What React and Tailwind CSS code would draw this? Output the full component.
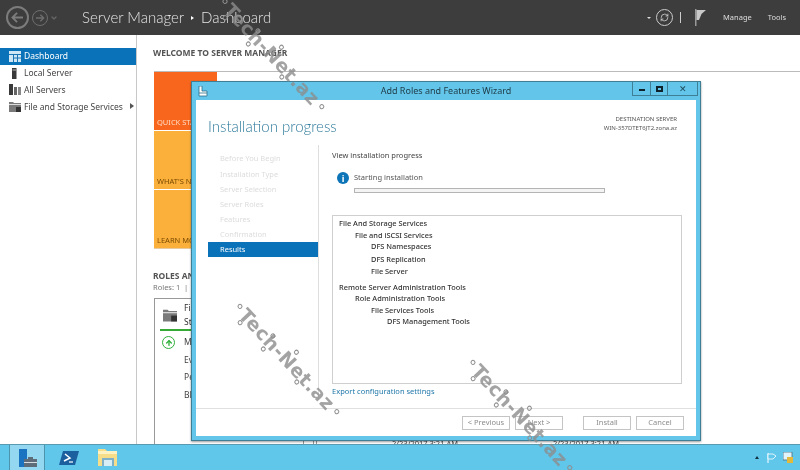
import React from 'react';
import { RefreshCw, ChevronDown, ArrowUp } from 'lucide-react';

const FONT = 'font-["Noto_Sans","Open_Sans",sans-serif]';
const LIGHT = 'font-["Lato","Noto_Sans",sans-serif] font-light';

const GridIcon = () => (
  <svg width="12" height="11" viewBox="0 0 12 11">
    <rect width="12" height="11" fill="#cfe6f5" />
    <path d="M0 3.500h12M4.500 3.500V11M8.500 3.500V11M4.500 7h7.500" stroke="#1b74b4" strokeWidth="1" />
  </svg>
);

const LocalServerIcon = () => (
  <svg width="12" height="11" viewBox="0 0 12 11">
    <rect x="3" y="0" width="4.500" height="11" fill="#3a3a3a" />
    <rect x="3.500" y="1.500" width="3.500" height="1" fill="#bbb" />
  </svg>
);

const AllServersIcon = () => (
  <svg width="12" height="11" viewBox="0 0 12 11">
    <rect x="0" y="0" width="4" height="11" fill="#3a3a3a" />
    <rect x="5" y="3" width="3" height="8" fill="#666" />
    <rect x="9" y="3" width="3" height="8" fill="#888" />
  </svg>
);

const FolderIcon = ({ w = 12, h = 11 }) => (
  <svg width={w} height={h} viewBox="0 0 12 11">
    <path d="M0 1h4l1 1h7v9H0z" fill="#7a7a7a" />
    <rect x="0" y="3" width="12" height="1" fill="#ddd" />
    <rect x="7" y="6" width="5" height="5" fill="#333" />
  </svg>
);

const Node = ({ className }) => (
  <span className={`absolute w-[5px] h-[5px] rounded-full border border-[#8f8f8f] ${className}`} />
);

// rotated logo text, the little rings are the circuit ends of the letters
const Watermark = ({ className }) => (
  <div className={`absolute w-[150px] h-[24px] rotate-[47deg] flex items-center justify-center pointer-events-none ${className}`}>
    <span className='text-[19px] leading-none font-bold font-["DejaVu_Sans",sans-serif] tracking-[0.5px] text-[#8c8c8c]/80 whitespace-nowrap'>Tech-Net.az</span>
    <Node className="left-[2px] top-[8px]" />
    <Node className="left-[14px] top-[19px]" />
    <Node className="left-[46px] top-[4px]" />
    <Node className="left-[49px] top-[20px]" />
    <Node className="left-[74px] top-[-2px]" />
    <Node className="left-[96px] top-[18px]" />
    <Node className="left-[145px] top-[9px]" />
  </div>
);

const navItems = [
  { label: 'Dashboard', icon: GridIcon, active: true },
  { label: 'Local Server', icon: LocalServerIcon },
  { label: 'All Servers', icon: AllServersIcon },
  { label: 'File and Storage Services', icon: FolderIcon, arrow: true },
];

const Sidebar = () => (
  <aside className="w-[137px] shrink-0 border-r border-[#c8c8c8] pt-[13px]">
    {navItems.map((item) => (
      <div
        key={item.label}
        className={`h-[16.700px] flex items-center pl-[9px] gap-[3px] text-[8.500px] whitespace-nowrap ${item.active ? 'bg-[#0a72b8] text-white' : 'text-[#444]'}`}
      >
        <item.icon />
        <span className="pt-px">{item.label}</span>
        {item.arrow && <span className="ml-[4px] w-0 h-0 border-y-[3px] border-y-transparent border-l-[4px] border-l-[#555]" />}
      </div>
    ))}
  </aside>
);

const tiles = [
  { label: 'QUICK START', bg: 'bg-[#f8661e]', text: 'text-[#ffd9c0]' },
  { label: "WHAT'S NEW", bg: 'bg-[#fbb03b]', text: 'text-[#7a4a00]' },
  { label: 'LEARN MORE', bg: 'bg-[#fbb03b]', text: 'text-[#7a4a00]' },
];

const MainPanel = () => (
  <main className="flex-1 pl-[16px] pt-[12px] text-[#444] relative">
    <h2 className="text-[8.500px] font-bold leading-[12px] text-[#555]">WELCOME TO SERVER MANAGER</h2>
    <div className="mt-[12px] h-[178px] border-t border-[#bbb] flex ml-px">
      <div className="w-[63px] flex flex-col gap-px border-b border-[#e8c9a0]">
        {tiles.map((t) => (
          <div key={t.label} className={`flex-1 ${t.bg} ${t.text} flex items-end pl-[3px] pb-[2px] text-[7.500px] whitespace-nowrap overflow-hidden`}>
            {t.label}
          </div>
        ))}
      </div>
    </div>
    <div className="mt-[21px] text-[8.500px] font-bold leading-[12px] text-[#555]">ROLES AND SERVER GROUPS</div>
    <div className="text-[7.500px] leading-[10px] text-[#777]">Roles: 1 &nbsp;|</div>
    <div className="mt-[6px] ml-px w-[160px] h-[146px] border border-b-0 border-[#999]">
      <div className="mx-[5px] h-[32px] border-b-2 border-[#35a835] flex items-center gap-[7px] pl-[3px] pt-[2px]">
        <FolderIcon w={14} h={14} />
        <div className="text-[8.500px] leading-[14px] text-[#333]">File and<br />Storage</div>
      </div>
      <div className="flex mt-[2px]">
        <div className="w-[27px] flex justify-center pt-[3px]">
          <span className="w-[13px] h-[13px] rounded-full border-[1.500px] border-[#2fb03a] flex items-center justify-center">
            <ArrowUp size={8} strokeWidth={4} className="text-[#2fb03a]" />
          </span>
        </div>
        <div className="pl-[2px] text-[8.500px] leading-[17.600px] text-[#444]">
          <div>Manageability</div>
          <div>Events</div>
          <div>Performance</div>
          <div>BPA results</div>
        </div>
      </div>
    </div>
    <div className="absolute bottom-0 left-[166px] flex items-end">
      <span className="w-px h-[4px] bg-[#999]" />
      <span className="w-px h-[4px] bg-[#999] ml-[12px]" />
    </div>
    <div className="absolute bottom-[-3px] left-[255px] text-[7.500px] leading-[8px] text-[#444] whitespace-nowrap">2/23/2017 3:21 AM</div>
    <div className="absolute bottom-[-3px] left-[416px] text-[7.500px] leading-[8px] text-[#444] whitespace-nowrap">2/23/2017 3:21 AM</div>
  </main>
);

const WizardSteps = ['Before You Begin', 'Installation Type', 'Server Selection', 'Server Roles', 'Features', 'Confirmation'];

const resultLines = [
  { t: 'File And Storage Services', pad: 'pl-[6px] mt-[2px]' },
  { t: 'File and iSCSI Services', pad: 'pl-[22px]' },
  { t: 'DFS Namespaces', pad: 'pl-[38px]' },
  { t: 'DFS Replication', pad: 'pl-[38px] mt-[1px]' },
  { t: 'File Server', pad: 'pl-[38px] mt-[1px]' },
  { t: 'Remote Server Administration Tools', pad: 'pl-[6px] mt-[4px]' },
  { t: 'Role Administration Tools', pad: 'pl-[22px]' },
  { t: 'File Services Tools', pad: 'pl-[38px]' },
  { t: 'DFS Management Tools', pad: 'pl-[54px]' },
];

const WizBtn = ({ children, className = '' }) => (
  <div className={`w-[48px] h-[14px] border border-[#c4c4c4] bg-white flex items-center justify-center text-[7.500px] text-[#8c8c8c] ${className}`}>{children}</div>
);

const Wizard = () => (
  <div className="absolute left-[191px] top-[81px] w-[510px] h-[360px] bg-[#62c5e9] border border-[#3f7f96] flex flex-col shadow-[0_1px_2px_rgba(0,0,0,0.4)]">
    <div className="h-[18px] shrink-0 flex items-center relative">
      <svg className="ml-[6px]" width="10" height="11" viewBox="0 0 10 11">
        <path d="M1 0h3v5h5v5H1z" fill="#fff" stroke="#2b6c8a" strokeWidth="0.800" />
        <path d="M1 7h8" stroke="#2b6c8a" strokeWidth="0.800" />
      </svg>
      <div className="absolute inset-0 flex items-center justify-center text-[9px] text-[#1f3a46]">Add Roles and Features Wizard</div>
      <div className="absolute right-[2px] top-0 h-[14px] flex border border-t-0 border-[#3f7f96]">
        <div className="w-[18px] flex items-center justify-center border-r border-[#3f7f96]"><span className="w-[6px] h-[2px] mt-[3px] bg-[#10222c]" /></div>
        <div className="w-[17px] flex items-center justify-center border-r border-[#3f7f96]"><span className="w-[7px] h-[6px] border-2 border-[#10222c]" /></div>
        <div className="w-[29px] flex items-center justify-center text-[9px] leading-none text-[#1f4a5c]">✕</div>
      </div>
    </div>
    <div className="flex-1 mx-[4px] mb-[4px] bg-white flex flex-col min-h-0">
      <div className="flex-1 flex flex-col min-h-0 pt-[16px]">
        <div className="flex justify-between items-start pl-[12px] pr-[19px]">
          <h1 className={`text-[15px] leading-[20px] text-[#2f7b9b] ${LIGHT}`}>Installation progress</h1>
          <div className="text-right text-[6px] leading-[8.500px] text-[#555] mt-[-1px]">
            <div>DESTINATION SERVER</div>
            <div>WIN-357DTET6JT2.zona.az</div>
          </div>
        </div>
        <div className="flex-1 flex min-h-0 mt-[9px]">
          <nav className="w-[110px] shrink-0 ml-[12px] pt-[6px]">
            {WizardSteps.map((s) => (
              <div key={s} className="h-[15.200px] pl-[12px] pt-px flex items-center text-[7.500px] text-[#dcdcdc]">{s}</div>
            ))}
            <div className="h-[15px] pl-[12px] flex items-center text-[7.500px] bg-[#0a72b8] text-white">Results</div>
          </nav>
          <div className="w-px bg-[#dedede] mb-[8px]" />
          <section className="flex-1 pl-[13px] pr-[14px] min-w-0 pt-[4px]">
            <div className="text-[7.500px] leading-[12px] text-[#444]">View installation progress</div>
            <div className="flex items-center mt-[11px] pl-[5px]">
              <span className="w-[12px] h-[12px] rounded-full bg-[#0d74b8] text-white flex items-center justify-center text-[9px] font-bold leading-none">i</span>
              <span className="ml-[5px] text-[7.500px] text-[#555]">Starting installation</span>
            </div>
            <div className="ml-[22px] mt-[4px] w-[251px] h-[5px] border border-[#b4b4b4] bg-[#f4f4f4]" />
            <div className="mt-[22px] h-[169px] border border-[#cfcfcf] text-[7.400px] text-[#333] font-medium leading-[11.500px]">
              {resultLines.map((l) => (
                <div key={l.t} className={l.pad}>{l.t}</div>
              ))}
            </div>
            <div className="mt-[1px] text-[7.500px] leading-[12px] text-[#1f77a8]">Export configuration settings</div>
          </section>
        </div>
      </div>
      <div className="h-[28px] shrink-0 border-t border-[#e0e0e0] flex items-center justify-end pr-[12px]">
        <WizBtn>&lt; Previous</WizBtn>
        <WizBtn className="ml-[5px]">Next &gt;</WizBtn>
        <WizBtn className="ml-[20px]">Install</WizBtn>
        <WizBtn className="ml-[5px]">Cancel</WizBtn>
      </div>
    </div>
  </div>
);

const Header = () => (
  <header className="h-[35px] shrink-0 bg-[#3d3d3d] flex items-center text-white">
    <div className="ml-[6px] w-[23px] h-[23px] rounded-full border-2 border-[#7c7c7c] flex items-center justify-center text-[#7c7c7c]">
      <svg width="13" height="11" viewBox="0 0 14 12" fill="none" stroke="currentColor" strokeWidth="2"><path d="M13 6H2M6.500 1 1.500 6l5 5" /></svg>
    </div>
    <div className="ml-[3px] w-[16px] h-[16px] rounded-full border border-[#6e6e6e] flex items-center justify-center text-[#6e6e6e]">
      <svg width="10" height="8" viewBox="0 0 14 12" fill="none" stroke="currentColor" strokeWidth="2"><path d="M1 6h11M7.500 1l5 5-5 5" /></svg>
    </div>
    <ChevronDown size={8} className="ml-[2px] text-[#666]" strokeWidth={4} />
    <div className={`ml-[24px] text-[15px] text-[#e4e4e4] flex items-center whitespace-nowrap ${LIGHT}`}>
      Server Manager
      <span className="mx-[7px] w-0 h-0 border-y-[2.500px] border-y-transparent border-l-[3px] border-l-white" />
      Dashboard
    </div>
    <div className="ml-auto flex items-center">
      <span className="w-0 h-0 border-x-[2px] border-x-transparent border-t-[2.500px] border-t-[#ddd]" />
      <div className="ml-[5px] w-[17px] h-[17px] rounded-full border border-[#ccc] flex items-center justify-center">
        <RefreshCw size={9} className="text-[#ddd]" />
      </div>
      <span className="ml-[7px] w-px h-[11px] bg-[#ccc]" />
      <svg className="ml-[14px]" width="11" height="17" viewBox="0 0 11 17">
        <rect x="0" y="0" width="1.500" height="17" fill="#999" />
        <path d="M1.500 1H11L6.500 5 4 11H1.500z" fill="#c9c9c9" />
      </svg>
      <span className="ml-[17px] text-[7.500px] text-[#ddd]">Manage</span>
      <span className="ml-[16px] mr-[14px] text-[7.500px] text-[#ddd]">Tools</span>
    </div>
  </header>
);

const Taskbar = () => (
  <footer className="h-[26px] shrink-0 bg-[#60c6ea] border-t border-[#5a9ab0] flex items-center relative">
    <div className="ml-[9px] w-[36px] h-[25px] bg-[#93d8f0] border-x border-[#4c93ad] flex items-center justify-center">
      <svg width="20" height="20" viewBox="0 0 20 20">
        <rect x="2" y="1" width="8" height="12" fill="#1a73c0" />
        <rect x="2" y="13" width="6" height="6" fill="#1a73c0" />
        <rect x="7" y="11" width="13" height="8" fill="#5d6c78" />
        <rect x="11" y="9" width="5" height="2" fill="#5d6c78" />
        <rect x="7" y="14" width="13" height="1" fill="#d5dde2" />
      </svg>
    </div>
    <div className="ml-[14px]">
      <svg width="20" height="16" viewBox="0 0 20 16">
        <path d="M4 1h16l-4 14H0z" fill="#1c5f9e" />
        <path d="M6 4l5 4-6 3" stroke="#fff" strokeWidth="1.500" fill="none" />
        <path d="M10 12h4" stroke="#fff" strokeWidth="1.200" />
      </svg>
    </div>
    <div className="ml-[18px]">
      <svg width="21" height="19" viewBox="0 0 21 19">
        <path d="M1 1h7l2 2h10v15H1z" fill="#f6dd8a" />
        <rect x="1" y="3" width="19" height="3" fill="#fff2c2" />
        <rect x="5" y="10" width="12" height="8" fill="#7fb0c8" />
        <rect x="7" y="12" width="8" height="6" fill="#d8eef6" />
      </svg>
    </div>
    <div className="ml-auto flex items-center mr-[7px]">
      <span className="w-0 h-0 border-x-[2.500px] border-x-transparent border-b-[3px] border-b-[#10303f]" />
      <svg className="ml-[8px]" width="10" height="10" viewBox="0 0 10 10"><path d="M1 0v10" stroke="#fff" /><path d="M1 1h5l3 2-3 3H1z" fill="#60c6ea" stroke="#fff" strokeWidth="0.800" /></svg>
      <svg className="ml-[6px]" width="10" height="11" viewBox="0 0 10 11"><rect x="0" y="0" width="9" height="8" fill="#dff3fa" stroke="#4a6a78" strokeWidth="0.800" /><rect x="4" y="5" width="6" height="6" fill="#e2b93b" /></svg>
    </div>
  </footer>
);

export default function App() {
  return (
    <div className={`relative w-[800px] h-[470px] overflow-hidden bg-white flex flex-col blur-[0.3px] ${FONT}`}>
      <Header />
      <div className="flex-1 flex min-h-0">
        <Sidebar />
        <MainPanel />
      </div>
      <Taskbar />
      <Wizard />
      <Watermark className="left-[197px] top-[42px]" />
      <Watermark className="left-[212px] top-[347px]" />
      <Watermark className="left-[445px] top-[403px]" />
    </div>
  );
}
